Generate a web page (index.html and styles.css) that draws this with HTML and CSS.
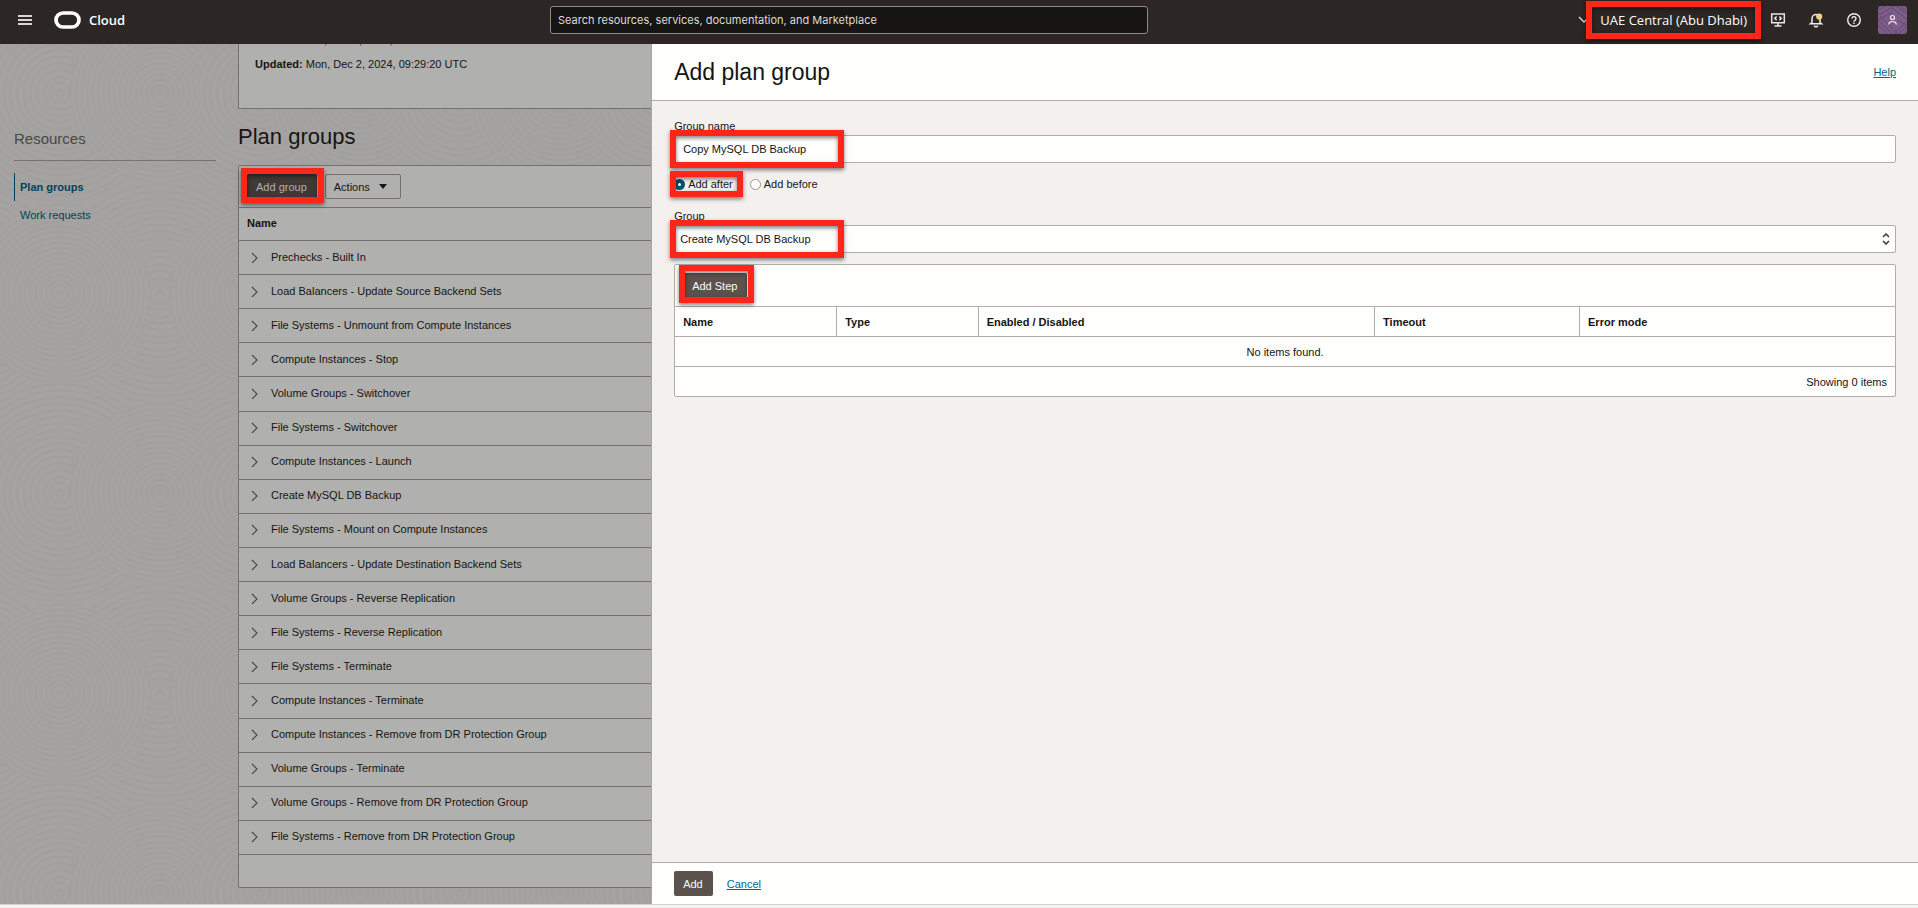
FILE: index.html
```html
<!DOCTYPE html>
<html lang="en">
<head>
    <meta charset="UTF-8">
    <meta name="viewport" content="width=device-width, initial-scale=1.0">
    <title>Plan groups - Oracle Cloud</title>
    <link rel="stylesheet" href="styles.css">
</head>
<body>
    <header class="topbar">
        <div class="topbar-left">
            <button class="icon-button" aria-label="Menu">
                <svg width="14" height="12" viewBox="0 0 14 12"><path d="M0 2h14M0 6h14M0 10h14" stroke="#d8d5d2" stroke-width="2"/></svg>
            </button>
            <a class="brand" href="#">
                <svg width="27" height="18" viewBox="0 0 27 18"><rect x="2" y="2" width="23" height="14" rx="7" fill="none" stroke="#fff" stroke-width="3.700"/></svg>
                Cloud
            </a>
        </div>
        <input class="search" type="text" aria-label="Search" placeholder="Search resources, services, documentation, and Marketplace">
        <div class="topbar-right">
            <svg class="region-arrow" width="8" height="8" viewBox="0 0 8 8"><path d="M1 1l5 5 2-2" fill="none" stroke="#e4e1de" stroke-width="1.3"/></svg>
            <button class="region marked">UAE Central (Abu Dhabi)</button>
            <button class="icon-button" aria-label="Developer tools">
                <svg width="16" height="16" viewBox="0 0 16 16" fill="none" stroke="#e8e6e3" stroke-width="1.5"><path d="M1.700 2h12.600v8.800H1.700zM8 10.800v3M4.500 14h7M6.600 4.500L4.800 6.300l1.800 1.800M9.400 4.500l1.800 1.800-1.800 1.800"/></svg>
            </button>
            <button class="icon-button" aria-label="Announcements">
                <svg width="16" height="16" viewBox="0 0 16 16" fill="none" stroke="#f0eeec" stroke-width="1.5"><path d="M4 10.500V6.500a4 4 0 0 1 8 0v4l1.500 1.300h-11zM6.300 13.600a1.700 1.400 0 0 0 3.400 0"/><circle cx="11.200" cy="4.600" r="3.100" fill="#f5cf85" stroke="none"/></svg>
            </button>
            <button class="icon-button" aria-label="Help">
                <svg width="16" height="16" viewBox="0 0 16 16" fill="none" stroke="#f0eeec" stroke-width="1.4"><circle cx="8" cy="8" r="6.300"/><path d="M6 6.600a2 1.900 0 1 1 3.200 1.500c-.8.500-1.200.8-1.200 1.600M8 10.600v1.300"/></svg>
            </button>
            <button class="avatar" aria-label="Profile">
                <svg width="29" height="28" viewBox="0 0 29 28" fill="none">
                    <path d="M0 4l8-4M0 9l17-9M0 14l14-8M0 19l9 9M0 14l14 14M2 10l18 18M18 0l11 8M22 0l7 5M14 2l15 11M29 15l-13 13M29 20l-8 8M29 25l-3 3M20 14l9 6" stroke="#6b4f77" stroke-width="1.200"/>
                    <g stroke="#eee6f0" stroke-width="1.200"><circle cx="14.500" cy="11.500" r="2"/><path d="M10.500 18.500c.4-2 1.900-3 4-3s3.600 1 4 3"/></g>
                </svg>
            </button>
        </div>
    </header>

    <main class="page">
        <svg class="page-pattern" width="100%" height="100%" aria-hidden="true">
            <defs>
                <radialGradient id="rings" r="0.03" spreadMethod="repeat">
                    <stop offset="0" stop-color="#a5a4a2"/>
                    <stop offset="0.5" stop-color="#a1a09e"/>
                    <stop offset="1" stop-color="#a5a4a2"/>
                </radialGradient>
                <pattern id="swirls" width="200" height="400" patternUnits="userSpaceOnUse">
                    <g fill="url(#rings)">
                        <circle cx="-40" cy="250" r="110"/>
                        <circle cx="160" cy="250" r="110"/>
                        <circle cx="60" cy="250" r="90"/>
                        <circle cx="260" cy="250" r="90"/>
                        <circle cx="-40" cy="449" r="100"/>
                        <circle cx="-40" cy="49" r="100"/>
                        <circle cx="60" cy="49" r="110"/>
                        <circle cx="60" cy="449" r="110"/>
                        <circle cx="160" cy="49" r="90"/>
                        <circle cx="160" cy="449" r="90"/>
                    </g>
                </pattern>
            </defs>
            <rect width="100%" height="100%" fill="url(#swirls)"/>
        </svg>

        <nav class="sidebar">
            <h2>Resources</h2>
            <ul>
                <li class="active"><a href="#">Plan groups</a></li>
                <li><a href="#">Work requests</a></li>
            </ul>
        </nav>

        <section class="content">
            <div class="details">
                <p><b>Created:</b> Mon, Dec 2, 2024, 09:29:20 UTC</p>
                <p><b>Updated:</b> Mon, Dec 2, 2024, 09:29:20 UTC</p>
            </div>
            <h1>Plan groups</h1>
            <div class="groups">
                <div class="toolbar">
                    <span class="marked"><button class="button">Add group</button></span>
                    <button class="button outline">Actions
                        <svg width="8" height="5" viewBox="0 0 8 5"><path d="M0 0h8L4 5z" fill="#161513"/></svg>
                    </button>
                </div>
                <table class="group-table">
                    <thead>
                        <tr><th>Name</th></tr>
                    </thead>
                    <tbody id="group-rows"></tbody>
                    <tfoot>
                        <tr><td></td></tr>
                    </tfoot>
                </table>
            </div>
        </section>

        <form class="drawer">
            <div class="drawer-header">
                <h2>Add plan group</h2>
                <a href="#">Help</a>
            </div>
            <div class="drawer-body">
                <label for="group-name">Group name</label>
                <div class="field marked">
                    <input type="text" id="group-name" value="Copy MySQL DB Backup">
                </div>
                <div class="radios">
                    <label class="marked"><input type="radio" name="position" checked> Add after</label>
                    <label><input type="radio" name="position"> Add before</label>
                </div>
                <label for="group">Group</label>
                <div class="field marked">
                    <select id="group">
                        <option>Create MySQL DB Backup</option>
                    </select>
                    <svg class="select-arrows" width="8" height="12" viewBox="0 0 8 12"><path d="M1 4l3-3 3 3M1 8l3 3 3-3" fill="none" stroke="#3a3632" stroke-width="1.500"/></svg>
                </div>
                <div class="steps">
                    <div class="toolbar">
                        <span class="marked"><button type="button" class="button">Add Step</button></span>
                    </div>
                    <table class="step-table">
                        <thead>
                            <tr>
                                <th>Name</th>
                                <th>Type</th>
                                <th>Enabled / Disabled</th>
                                <th>Timeout</th>
                                <th>Error mode</th>
                            </tr>
                        </thead>
                        <tbody>
                            <tr><td class="empty" colspan="5">No items found.</td></tr>
                        </tbody>
                        <tfoot>
                            <tr><td class="count" colspan="5">Showing 0 items</td></tr>
                        </tfoot>
                    </table>
                </div>
            </div>
            <div class="drawer-footer">
                <button type="button" class="button">Add</button>
                <a href="#">Cancel</a>
            </div>
        </form>
    </main>
    <footer class="page-footer"></footer>

    <script>
        const groups = [
            'Prechecks - Built In',
            'Load Balancers - Update Source Backend Sets',
            'File Systems - Unmount from Compute Instances',
            'Compute Instances - Stop',
            'Volume Groups - Switchover',
            'File Systems - Switchover',
            'Compute Instances - Launch',
            'Create MySQL DB Backup',
            'File Systems - Mount on Compute Instances',
            'Load Balancers - Update Destination Backend Sets',
            'Volume Groups - Reverse Replication',
            'File Systems - Reverse Replication',
            'File Systems - Terminate',
            'Compute Instances - Terminate',
            'Compute Instances - Remove from DR Protection Group',
            'Volume Groups - Terminate',
            'Volume Groups - Remove from DR Protection Group',
            'File Systems - Remove from DR Protection Group'
        ];
        const arrow = '<svg width="8" height="12" viewBox="0 0 8 12"><path d="M1 2l5 5-5 5" fill="none" stroke="#4a4745" stroke-width="1.200"/></svg>';
        document.getElementById('group-rows').innerHTML = groups
            .map(name => `<tr><td><div class="group-name">${arrow}<span>${name}</span></div></td></tr>`)
            .join('');
    </script>
</body>
</html>
```
FILE: styles.css
```css
* {
    box-sizing: border-box;
}
body {
    font-family: "Liberation Sans", Arial, sans-serif;
    font-size: 11px;
    line-height: 16px;
    color: #161513;
    background-color: #f5f4f2;
    margin: 0;
    height: 100vh;
    display: flex;
    flex-direction: column;
}
h1, h2, p, ul {
    margin: 0;
    padding: 0;
    font-weight: normal;
}
button, input, select {
    font: inherit;
    color: inherit;
}
button {
    border: none;
    background: none;
    padding: 0;
    cursor: pointer;
}
svg {
    display: block;
}
a {
    color: #00688c;
}

/* Top bar */
.topbar {
    height: 44px;
    flex: none;
    display: grid;
    grid-template-columns: 532fr 598fr 759fr;
    align-items: center;
    padding: 0 11px 0 18px;
    background-color: #2c2724;
    color: #fff;
    font-family: "Open Sans", sans-serif;
    position: relative;
    z-index: 2;
}
.topbar-left, .topbar-right {
    display: flex;
    align-items: center;
    padding-bottom: 4px;
}
.topbar-left {
    gap: 22px;
}
.topbar-right {
    justify-content: flex-end;
}
.brand {
    display: flex;
    align-items: center;
    gap: 8px;
    color: #fff;
    font-size: 13px;
    font-weight: 600;
    text-decoration: none;
}
.search {
    height: 28px;
    margin-bottom: 4px;
    padding: 0 7px;
    border: 1px solid #8f8b87;
    border-radius: 3px;
    background-color: #161513;
    font-family: Inter, sans-serif;
}
.search::placeholder {
    color: #dedbd8;
    opacity: 1;
}
.region {
    height: 26px;
    padding: 0 8px;
    margin: 0 15px 0 6px;
    font-size: 13px;
    font-weight: 500;
}
.topbar-right .icon-button {
    margin-right: 22px;
}
.topbar-right .icon-button:nth-of-type(4) {
    margin-right: 16px;
}
.avatar {
    border-radius: 3px;
    background-color: #7d5d89;
    overflow: hidden;
}

/* Red call-out frames */
.marked {
    position: relative;
}
.marked::after {
    content: "";
    position: absolute;
    inset: -6px;
    border: 6px solid #fe251b;
    filter: drop-shadow(0 2px 2px rgba(0, 0, 0, 0.5));
    pointer-events: none;
}

/* Page behind the drawer */
.page {
    flex: 1;
    min-height: 0;
    position: relative;
    display: grid;
    grid-template-columns: 238px 1fr;
    overflow: hidden;
    background-color: #a4a3a1;
}
.page-pattern {
    position: absolute;
    inset: 0;
}
.sidebar {
    position: relative;
    padding: 85px 22px 0 14px;
}
.sidebar h2 {
    font-size: 15px;
    line-height: 20px;
    padding-bottom: 11px;
    border-bottom: 1px solid #7b726c;
    color: #4a4745;
}
.sidebar ul {
    list-style: none;
    margin-top: 12px;
}
.sidebar li {
    line-height: 28px;
    padding-left: 5px;
    border-left: 1px solid transparent;
}
.sidebar li.active {
    border-left-color: #00435a;
    font-weight: bold;
}
.sidebar a {
    color: #00435a;
    text-decoration: none;
}
.content {
    position: relative;
    min-height: 0;
    display: flex;
    flex-direction: column;
    padding: 0 24px 16px 0;
}
.details {
    height: 65px;
    flex: none;
    display: flex;
    flex-direction: column;
    justify-content: flex-end;
    gap: 8px;
    padding: 0 16px 36px;
    border: 1px solid #76716e;
    border-top: none;
    background-color: #b0b0ae;
}
.content h1 {
    font-size: 22px;
    line-height: 28px;
    padding: 14px 0;
}
.groups {
    flex: 1;
    display: flex;
    flex-direction: column;
    border: 1px solid #76716e;
    border-radius: 2px;
    background-color: #b0b0ae;
}
.toolbar {
    height: 41px;
    flex: none;
    display: flex;
    align-items: center;
    gap: 8px;
    padding: 0 8px;
}
.button {
    display: flex;
    align-items: center;
    gap: 9px;
    height: 25px;
    padding: 0 10px 0 9px;
    border-radius: 2px;
    background-color: #5b524e;
    color: #fcfbfa;
}
.groups .button {
    background-color: #3f3935;
    color: #b0b0ae;
}
.groups .button.outline {
    padding: 0 13px 0 8px;
    border: 1px solid #76716e;
    background-color: transparent;
    color: #161513;
}
.groups .marked::after {
    inset: -6px -7px -4px -6px;
}
.group-table {
    flex: 1;
    width: 100%;
    border-spacing: 0;
}
.group-table th, .group-table td {
    height: 34px;
    padding: 0 8px 2px;
    border-top: 1px solid #76716e;
    text-align: left;
}
.group-table th, .group-table tfoot td {
    height: 33px;
}
.group-name {
    display: flex;
    align-items: center;
    gap: 12px;
    padding-left: 4px;
}

/* Drawer */
.drawer {
    position: absolute;
    top: 0;
    right: 0;
    bottom: 0;
    width: 66%;
    display: flex;
    flex-direction: column;
    background-color: #f4f0ee;
    box-shadow: -1px 0 #a9a6a4;
}
.drawer-header, .drawer-footer {
    display: flex;
    align-items: center;
    padding: 0 22px;
    background-color: #fefefc;
}
.drawer-header {
    height: 57px;
    justify-content: space-between;
    border-bottom: 1px solid #b3aca7;
}
.drawer-header h2 {
    font-size: 23px;
    line-height: 28px;
}
.drawer-body {
    flex: 1;
    display: flex;
    flex-direction: column;
    padding: 17px 22px;
}
.field {
    margin: 1px 0 11px;
}
.field input, .field select {
    display: block;
    width: 100%;
    height: 28px;
    padding: 0 8px;
    border: 1px solid #b3aca7;
    border-radius: 2px;
    background-color: #fefefc;
}
.field select {
    appearance: none;
    padding: 0 5px;
}
.field.marked::after {
    inset: -5px auto -5px -4px;
    width: 162px;
}
.select-arrows {
    position: absolute;
    top: 8px;
    right: 6px;
}
.radios {
    display: flex;
    gap: 17px;
    margin: 2px 0 16px;
}
.radios label {
    display: flex;
    align-items: center;
    gap: 3px;
}
.radios .marked::after {
    inset: -5px -10px -5px -4px;
}
.radios input {
    appearance: none;
    width: 11px;
    height: 11px;
    margin: 0;
    border: 1px solid #9c9590;
    border-radius: 50%;
    background-color: #fff;
}
.radios input:checked {
    border: 4px solid #00536f;
}
.steps {
    border: 1px solid #b3aca7;
    border-radius: 2px;
    background-color: #fefefc;
}
.steps .marked::after {
    inset: -8px -7px -5px -4px;
}
.step-table {
    width: 100%;
    table-layout: fixed;
    border-spacing: 0;
}
.step-table th, .step-table td {
    height: 30px;
    padding: 0 8px;
    border-top: 1px solid #b3aca7;
    text-align: left;
}
.step-table th + th {
    border-left: 1px solid #b3aca7;
}
.step-table th:nth-child(1) {
    width: 13.2%;
}
.step-table th:nth-child(2) {
    width: 11.6%;
}
.step-table th:nth-child(3) {
    width: 32.5%;
}
.step-table th:nth-child(4) {
    width: 16.8%;
}
.step-table .empty {
    text-align: center;
}
.step-table .count {
    text-align: right;
}
.drawer-footer {
    height: 42px;
    gap: 14px;
    border-top: 1px solid #b3aca7;
}
.page-footer {
    height: 4px;
    flex: none;
    border-top: 1px solid #d2d0cd;
}
```
